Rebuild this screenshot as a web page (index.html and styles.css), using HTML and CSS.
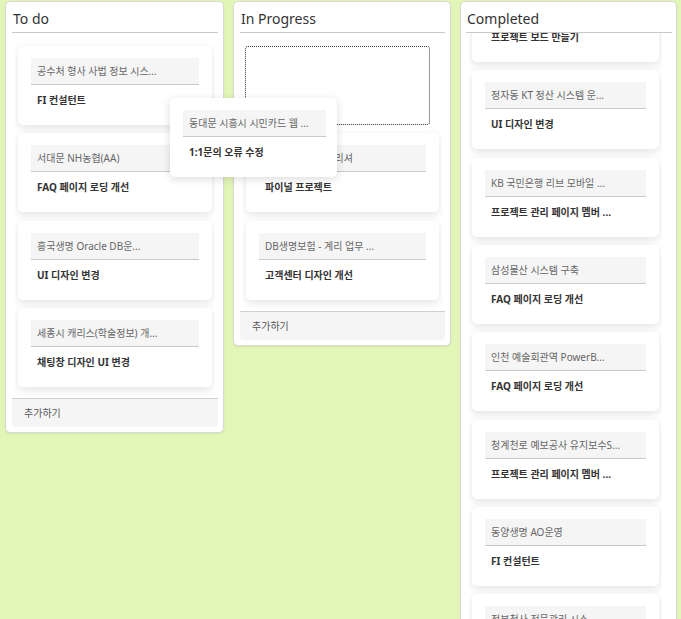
FILE: index.html
```html
<!DOCTYPE html>
<html lang="ko">
<head>
<meta charset="utf-8">
<title>Kanban</title>
<link rel="stylesheet" href="styles.css">
<script src="script.js" defer></script>
</head>
<body>
<div class="board">
  <section class="column col-todo">
    <h2 class="col-title">To do</h2>
    <div class="list">
      <div class="card"><div class="card-title">공수처 형사 사법 정보 시스...</div><div class="card-body">FI 컨설턴트</div></div>
      <div class="card"><div class="card-title">서대문 NH농협(AA)</div><div class="card-body">FAQ 페이지 로딩 개선</div></div>
      <div class="card"><div class="card-title">흥국생명 Oracle DB운...</div><div class="card-body">UI 디자인 변경</div></div>
      <div class="card"><div class="card-title">세종시 캐리스(학술정보) 개...</div><div class="card-body">채팅창 디자인 UI 변경</div></div>
    </div>
    <div class="col-footer">추가하기</div>
  </section>

  <section class="column col-progress">
    <h2 class="col-title">In Progress</h2>
    <div class="list">
      <div class="placeholder"></div>
      <div class="card"><div class="card-title">한화생명 모바일 리셔</div><div class="card-body">파이널 프로젝트</div></div>
      <div class="card"><div class="card-title">DB생명보험 - 계리 업무 ...</div><div class="card-body">고객센터 디자인 개선</div></div>
    </div>
    <div class="col-footer">추가하기</div>
  </section>

  <section class="column col-done">
    <h2 class="col-title">Completed</h2>
    <div class="list" id="done-list">
      <div class="card"><div class="card-title">삼성전자 협업 시스템 구...</div><div class="card-body">프로젝트 보드 만들기</div></div>
      <div class="card"><div class="card-title">정자동 KT 정산 시스템 운...</div><div class="card-body">UI 디자인 변경</div></div>
      <div class="card"><div class="card-title">KB 국민은행 리브 모바일 ...</div><div class="card-body">프로젝트 관리 페이지 멤버 ...</div></div>
      <div class="card"><div class="card-title">삼성물산 시스템 구축</div><div class="card-body">FAQ 페이지 로딩 개선</div></div>
      <div class="card"><div class="card-title">인천 예술회관역 PowerB...</div><div class="card-body">FAQ 페이지 로딩 개선</div></div>
      <div class="card"><div class="card-title">청계천로 예보공사 유지보수S...</div><div class="card-body">프로젝트 관리 페이지 멤버 ...</div></div>
      <div class="card"><div class="card-title">동양생명 AO운영</div><div class="card-body">FI 컨설턴트</div></div>
      <div class="card"><div class="card-title">정부청사 전문관리 시스...</div><div class="card-body">UI 디자인 변경</div></div>
    </div>
    <div class="col-footer">추가하기</div>
  </section>

  <div class="card card-drag"><div class="card-title">동대문 시흥시 시민카드 웹 ...</div><div class="card-body">1:1문의 오류 수정</div></div>
</div>
</body>
</html>
```

FILE: styles.css
```css
html, body {
  margin: 0;
  height: 100%;
  overflow: hidden;
}
body {
  background: #e2f6b8;
  font-family: "Noto Sans", "Noto Sans CJK KR", sans-serif;
  color: #333;
}
.board {
  position: relative;
  display: grid;
  grid-template-columns: 219px 218px 217px;
  column-gap: 9px;
  align-items: start;
  padding: 1px 0 0 5px;
  height: 100vh;
  box-sizing: border-box;
}
.column {
  background: #fff;
  border: 1px solid #d9d9d9;
  border-radius: 5px;
  box-shadow: 0 1px 2px rgba(0,0,0,0.08);
  display: flex;
  flex-direction: column;
  padding-bottom: 5px;
  box-sizing: border-box;
}
.col-title {
  margin: 0 5px 0 6px;
  padding: 6px 0 2px 1px;
  font-size: 14px;
  line-height: 22px;
  font-weight: 400;
  color: #333;
  border-bottom: 1px solid #c8c8c8;
}
.list {
  margin: 0 8px 0 9px;
  padding: 13px 3px 11px;
  display: flex;
  flex-direction: column;
  gap: 8.33px;
  overflow: hidden;
}
.card {
  background: #fff;
  border-radius: 5px;
  box-shadow: 0 3px 9px rgba(0,0,0,0.11);
  padding: 12px 13px 18px;
  height: 79px;
  box-sizing: border-box;
  flex-shrink: 0;
}
.card-title {
  background: #f5f5f5;
  border-bottom: 1px solid #c9c9c9;
  height: 26px;
  line-height: 26px;
  padding: 0 6px;
  font-size: 10px;
  color: #666;
  white-space: nowrap;
  overflow: hidden;
}
.card-body {
  padding: 8px 6px 0;
  font-size: 10px;
  line-height: 14px;
  font-weight: 700;
  color: #333;
  white-space: nowrap;
}
.placeholder {
  height: 79px;
  box-sizing: border-box;
  border: 1px dotted #333;
  border-radius: 3px;
  margin: 0 9px 0 -1px;
  flex-shrink: 0;
}
.col-footer {
  margin: 0 5px 0 6px;
  border-top: 1px solid #d0d0d0;
  background: #f5f5f5;
  border-radius: 0 0 4px 4px;
  height: 28px;
  line-height: 28px;
  padding-left: 12px;
  font-size: 10px;
  color: #555;
}
.col-done {
  height: 700px;
}
.col-done .col-title {
  margin: 0 4px 0 5px;
}
.col-done .list {
  flex: 1;
  margin-right: 14px;
  margin-left: 8px;
}
.card-drag {
  position: absolute;
  left: 170px;
  top: 98px;
  width: 167px;
  padding-right: 11px;
  box-shadow: 0 2px 10px rgba(0,0,0,0.14);
  z-index: 5;
}
```

FILE: script.js
```js
document.getElementById('done-list').scrollTop = 63;
```
